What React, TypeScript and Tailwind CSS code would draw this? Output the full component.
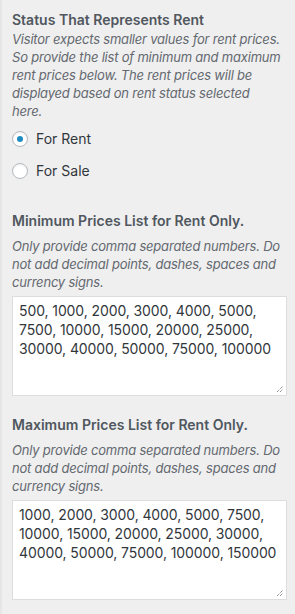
import React from "react";

const font = { fontFamily: "Inter, 'Liberation Sans', sans-serif" };

function Radio({ checked, label }: { checked?: boolean; label: string }) {
  return (
    <label className="flex items-center gap-[8px] text-[14px] leading-[21px] text-[#32373c]">
      <span className="flex h-[16px] w-[16px] items-center justify-center rounded-full border border-[#b4b9be] bg-white shadow-[inset_0_1px_2px_rgba(0,0,0,0.07)]">
        {checked && <span className="h-[6px] w-[6px] rounded-full bg-[#1e8cbe]" />}
      </span>
      <span>{label}</span>
    </label>
  );
}

function Field({ title, value }: { title: string; value: string }) {
  return (
    <div className="flex flex-col">
      <div className="text-[14px] font-semibold leading-[18px] text-[#50575e]">{title}</div>
      <p className="mt-[7px] text-[13px] italic leading-[18px] tracking-[-0.2px] text-[#646970]">
        Only provide comma separated numbers. Do not add decimal points, dashes, spaces and currency signs.
      </p>
      <div className="relative mt-[5px] h-[100px] w-[275px] border border-[#dddddd] bg-white px-[6px] py-[4px] text-[14px] leading-[19px] tracking-[-0.1px] text-[#32373c]">
        {value}
        <svg className="absolute bottom-[2px] right-[2px]" width="8" height="8" viewBox="0 0 8 8">
          <path d="M1 7 L7 1 M4 7 L7 4" stroke="#666" strokeWidth="1" strokeDasharray="1 1" />
        </svg>
      </div>
    </div>
  );
}

export default function App() {
  return (
    <div className="min-h-[614px] w-[295px] border-l-2 border-[#e6e6e6] bg-[#efefef] pl-[10px] pt-[11px]" style={font}>
      <div className="text-[14px] font-semibold leading-[18px] text-[#50575e]">Status That Represents Rent</div>
      <p className="mt-[1px] w-[270px] text-[13px] italic leading-[18px] tracking-[-0.2px] text-[#646970]">
        Visitor expects smaller values for rent prices. So provide the list of minimum and maximum rent prices below. The rent prices will be displayed based on rent status selected here.
      </p>
      <div className="mt-[8px] flex flex-col gap-[11px]">
        <Radio checked label="For Rent" />
        <Radio label="For Sale" />
      </div>
      <div className="mt-[31px]">
        <Field
          title="Minimum Prices List for Rent Only."
          value="500, 1000, 2000, 3000, 4000, 5000, 7500, 10000, 15000, 20000, 25000, 30000, 40000, 50000, 75000, 100000"
        />
      </div>
      <div className="mt-[20px]">
        <Field
          title="Maximum Prices List for Rent Only."
          value="1000, 2000, 3000, 4000, 5000, 7500, 10000, 15000, 20000, 25000, 30000, 40000, 50000, 75000, 100000, 150000"
        />
      </div>
    </div>
  );
}
